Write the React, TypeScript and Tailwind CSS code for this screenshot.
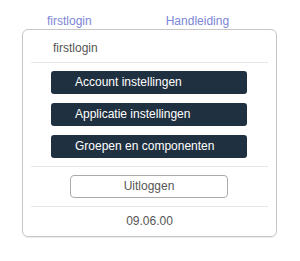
import React from 'react';

const menuItems = ['Account instellingen', 'Applicatie instellingen', 'Groepen en componenten'];

export default function App() {
  return (
    <div className="w-[300px] h-[261px] bg-white font-['Liberation_Sans',Arial,sans-serif] text-[12px]">
      <div className="flex pt-[13px] h-[29px] leading-[16px] text-[#7b85d6]">
        <a className="ml-[47px]">firstlogin</a>
        <a className="ml-[74px]">Handleiding</a>
      </div>

      <div className="ml-[22px] w-[255px] h-[208px] border border-[#c6c6c6] rounded-[6px] shadow-[0_1px_1px_rgba(0,0,0,0.08)]">
        <div className="pl-[30px] pt-[10px] h-[32px] leading-[16px] text-[#555]">firstlogin</div>
        <div className="mx-[8px] border-t border-[#e6e6e6]" />

        <div className="flex flex-col gap-[9px] pt-[8px] pb-[8px] pl-[28px]">
          {menuItems.map((label) => (
            <button
              key={label}
              className="w-[196px] h-[23px] rounded-[3px] bg-[#1f3040] text-white text-left pl-[24px] leading-[23px]"
            >
              {label}
            </button>
          ))}
        </div>

        <div className="mx-[8px] border-t border-[#e6e6e6]" />
        <div className="pt-[8px] pb-[8px] pl-[47px]">
          <button className="w-[158px] h-[23px] rounded-[4px] border border-[#aaa] bg-white text-[#555] leading-[21px]">
            Uitloggen
          </button>
        </div>

        <div className="mx-[8px] border-t border-[#e6e6e6]" />
        <div className="text-center text-[#555] pt-[6px] leading-[16px]">09.06.00</div>
      </div>
    </div>
  );
}
